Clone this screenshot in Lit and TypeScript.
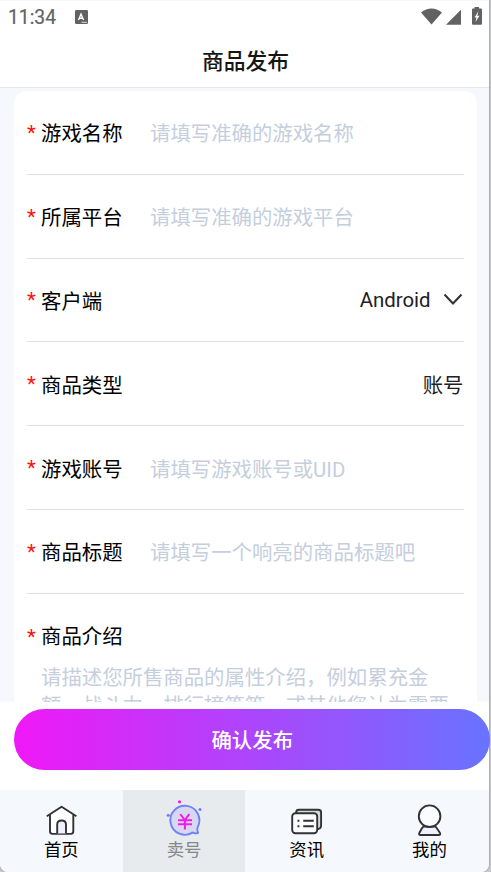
import { LitElement, html, css, svg } from "lit";
import { customElement } from "lit/decorators.js";
import { classMap } from "lit/directives/class-map.js";

const fields = [
  { label: "游戏名称", placeholder: "请填写准确的游戏名称" },
  { label: "所属平台", placeholder: "请填写准确的游戏平台" },
  { label: "客户端", value: "Android", select: true },
  { label: "商品类型", value: "账号" },
  { label: "游戏账号", placeholder: "请填写游戏账号或UID" },
  { label: "商品标题", placeholder: "请填写一个响亮的商品标题吧" },
];

const icons = {
  home: svg`
    <path d="M7.300 15.200H10V31.200Q10 33.800 12.600 33.800H29.400Q32 33.800 32 31.200V15.200" fill="#fff" stroke="none"/>
    <path d="M5.800 16.200 20.600 6.700 35.400 16.200" fill="#fff"/>
    <path d="M9 15V31.300Q9 33.900 11.600 33.900H29.700Q32.300 33.900 32.300 31.300V15"/>
    <path d="M16.200 33.500V24.500Q16.200 20.500 20.600 20.500 25 20.500 25 24.500V33.500" fill="#f0f0fe"/>`,
  sell: svg`
    <circle cx="15.500" cy="1.800" r="1.600" fill="#f01be8" stroke="none"/>
    <circle cx="4.200" cy="15.200" r="1.500" fill="#707cf8" stroke="none"/>
    <circle cx="36" cy="9.500" r="1.500" fill="#707cf8" stroke="none"/>
    <path d="M33.600 27.200A14.500 14.500 0 1 0 28.800 32.400Q31 34 34.100 32.900 32.600 30.300 33.600 27.200Z" fill="#d7d8ef" stroke="#7080fa" stroke-width="1.900"/>
    <path d="M16.300 14.200 20.800 20 25.300 14.200M14 20.200H28M14 24.200H28M20.900 20V29.500" fill="none" stroke="#f01be8" stroke-width="2"/>`,
  news: svg`
    <path d="M10.200 13V12.200Q10.200 9.700 12.800 9.700H32.300Q35.100 9.700 35.100 12.500V25.500Q35.100 28.700 31.500 29.200" fill="#d9dad6"/>
    <rect x="6.200" y="13.200" width="25" height="20" rx="3.200" fill="#fbfcfe"/>
    <path d="M17.200 20.700H27.800M17.200 26.300H27.800M11.500 20.700H13.400M11.500 26.300H13.400"/>`,
  mine: svg`
    <path d="M14.500 26.500H26.500Q28.500 29 31 33 31.800 35 29.800 35H11.500Q9.500 35 10.300 33 12.500 28 14.500 26.500Z" fill="#f0f0fe"/>
    <circle cx="20.600" cy="16.200" r="10.800" fill="#fbfcfd"/>`,
};

const tabs = [
  { label: "首页", icon: icons.home, active: false },
  { label: "卖号", icon: icons.sell, active: true },
  { label: "资讯", icon: icons.news, active: false },
  { label: "我的", icon: icons.mine, active: false },
];

@customElement("app-root")
export class AppRoot extends LitElement {
  static styles = css`
    :host {
      display: block;
      width: 491px;
      height: 872px;
      overflow: hidden;
      background: #c8c9cb;
      font-family: Roboto, "Noto Sans CJK SC", sans-serif;
      font-size: 20.4px;
      color: #111;
    }
    * { box-sizing: border-box; }
    .phone {
      display: flex;
      flex-direction: column;
      width: 489px;
      height: 872px;
      background: #fff;
      border-radius: 0 0 8px 8px;
      box-shadow: 0 0 1px 1px #aaabad;
    }
    .status {
      display: flex;
      align-items: center;
      height: 34px;
      padding: 0 6px 0 8px;
      border-top: 1px solid #f4f7fb;
      flex: none;
      color: #626262;
    }
    .time { font-size: 19.300px; font-weight: 400; -webkit-text-stroke: 0.2px #626262; line-height: 33px; width: 49px; }
    .badge { margin: -2px 0 0 18px; }
    .signals { display: flex; margin-left: auto; margin-top: -3px; }
    svg { display: block; flex: none; }
    .title {
      height: 54px;
      flex: none;
      display: flex;
      align-items: center;
      justify-content: center;
      padding: 0 0 2px 2px;
      font-size: 21.8px;
      font-weight: 500;
      color: #151515;
      border-bottom: 1px solid #e6e8ea;
    }
    .scroll {
      height: 614px;
      flex: none;
      overflow: hidden;
      padding: 3px 12px 0 13.500px;
      background: #f5f9fd;
    }
    .card {
      height: 700px;
      background: #fff;
      border-radius: 13px;
      padding: 0 13.500px;
    }
    .row {
      display: flex;
      align-items: center;
      height: 83.800px;
      border-bottom: 1px solid #dfdfdf;
    }
    .star { width: 14px; color: #ff1010; flex: none; padding-top: 1px; }
    .label { width: 109px; color: #000; flex: none; }
    .hint { color: #c5cedd; }
    .value { display: flex; align-items: center; margin-left: auto; color: #202124; padding-top: 1px; }
    .chevron { margin: 0 1px 0 12px; }
    .intro { display: flex; height: 70.500px; padding-top: 28px; line-height: 30px; }
    .intro .star { padding-top: 0; }
    .desc { color: #c5cedd; line-height: 28px; padding-left: 14px; width: 424px; white-space: nowrap; }
    .action { height: 88px; flex: none; padding: 6.500px 0 0 13.500px; }
    .submit {
      width: 476.500px;
      height: 61.500px;
      border: 0;
      display: block;
      border-radius: 31px;
      background: linear-gradient(90deg, #f018f7, #6873ff);
      color: #fff;
      font: 500 20.400px Roboto, "Noto Sans CJK SC", sans-serif;
      padding: 0 0 1px 1px;
    }
    .tabs {
      display: grid;
      grid-template-columns: repeat(4, 122.700px);
      height: 82px;
      flex: none;
      background: #f5f9fd;
      border-radius: 0 0 8px 8px;
      overflow: hidden;
    }
    .tab {
      display: flex;
      flex-direction: column;
      align-items: center;
      padding-top: 10px;
      font-size: 17.400px;
      line-height: 24px;
      color: #000;
    }
    .tab.active { background: #e7ebee; color: #858789; }
    .icon { fill: none; stroke: #303234; stroke-width: 1.900; stroke-linejoin: round; overflow: visible; margin-right: 1px; }
  `;

  render() {
    return html`
      <div class="phone">
        <div class="status">
          <span class="time">11:34</span>
          <svg class="badge" width="13" height="14" viewBox="0 0 13 14">
            <rect width="13" height="14" rx="1.200" fill="#626262" />
            <path d="M3.500 10 6 4 8.500 10M4.300 8.200H7.700" fill="none" stroke="#fff" stroke-width="1.400" />
            <path d="M6.500 12.300H12" stroke="#ddd" />
          </svg>
          <div class="signals">
            <svg width="62" height="20" viewBox="0 0 62 20" fill="#626262">
              <path d="M0 6.500Q10.500-1.500 21 6.500L10.500 18.500Z" />
              <path d="M25 18.700 40 3.700V18.700Z" />
              <path d="M53.500 1H58V2.500H60Q61 2.500 61 3.500V17.700Q61 18.700 60 18.700H52Q51 18.700 51 17.700V3.500Q51 2.500 52 2.500H53.500Z" />
              <path d="M57.500 5 53.500 11.500H55.500L54.500 16 58.500 9.700H56.300Z" fill="#fff" />
            </svg>
          </div>
        </div>
        <div class="title">商品发布</div>
        <div class="scroll">
          <div class="card">
            ${fields.map((f) => html`
              <div class="row">
                <span class="star">*</span>
                <span class="label">${f.label}</span>
                ${f.placeholder ? html`<span class="hint">${f.placeholder}</span>` : ""}
                ${f.value ? html`<span class="value">${f.value}${f.select
                  ? html`<svg class="chevron" width="20" height="14" viewBox="0 0 20 14">
                      <path d="M1.500 1.500 10 10.500 18.500 1.500" fill="none" stroke="#303133" stroke-width="2" />
                    </svg>` : ""}</span>` : ""}
              </div>`)}
            <div class="intro"><span class="star">*</span><span class="label">商品介绍</span></div>
            <div class="desc">请描述您所售商品的属性介绍，例如累充金<br />额、战斗力、排行榜等等，或其他您认为需要</div>
          </div>
        </div>
        <div class="action"><button class="submit">确认发布</button></div>
        <nav class="tabs">
          ${tabs.map((t) => html`
            <div class=${classMap({ tab: true, active: t.active })}>
              <svg class="icon" width="40" height="38" viewBox="0 0 40 38">${t.icon}</svg>
              <span class="caption">${t.label}</span>
            </div>`)}
        </nav>
      </div>
    `;
  }
}
